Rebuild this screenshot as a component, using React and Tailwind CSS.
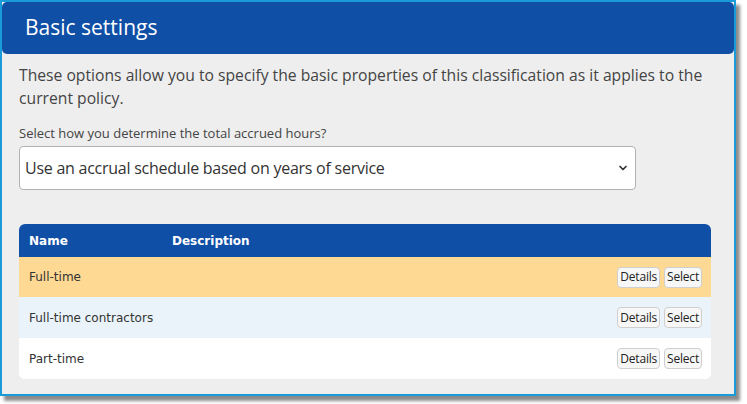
import { ChevronDown } from "lucide-react";

const rows = [
  { name: "Full-time", bg: "bg-[#fdd993]" },
  { name: "Full-time contractors", bg: "bg-[#eaf3fa]" },
  { name: "Part-time", bg: "bg-white" },
];

const RowButton = ({ label }) => (
  <button className="h-[21px] px-[2px] rounded-[4px] border border-[#cfcfcf] bg-[#f7f7f7] text-[12px] leading-none text-[#222] font-['Open_Sans',sans-serif] tracking-[-0.2px]">
    {label}
  </button>
);

export default function App() {
  return (
    <div className="w-[747px] h-[404px] bg-white">
      <div className="w-[736px] h-[396px] border-2 border-[#1a9bd9] bg-[#eeeeee] shadow-[4px_5px_3px_rgba(0,0,0,0.45)] flex flex-col font-['Open_Sans',sans-serif]">
        {/* header */}
        <div className="h-[52px] bg-[#0f4fa6] rounded-[5px] flex items-center pl-[23px]">
          <h1 className="text-white text-[21px]">Basic settings</h1>
        </div>

        <div className="px-[17px] pt-[10px]">
          <p className="text-[15.7px] leading-[23px] text-[#444]">
            These options allow you to specify the basic properties of this classification as it applies to the current policy.
          </p>

          <div className="mt-[14px] text-[13px] leading-[18px] text-[#444]">
            Select how you determine the total accrued hours?
          </div>
          <div className="mt-[4px] w-[617px] h-[44px] bg-white border border-[#b3b3b3] rounded-[4px] flex items-center justify-between pl-[5px] pr-[6px]">
            <span className="text-[16px] text-[#333] tracking-[-0.25px]">
              Use an accrual schedule based on years of service
            </span>
            <ChevronDown size={12} strokeWidth={3.5} className="text-[#333]" />
          </div>

          <div className="mt-[34px] w-[692px] rounded-[6px] overflow-hidden bg-white">
            <div className="h-[33px] bg-[#0f4fa6] flex items-center text-white text-[12px] font-bold font-['DejaVu_Sans',sans-serif]">
              <span className="w-[153px] pl-[10px]">Name</span>
              <span>Description</span>
            </div>
            {rows.map((r, i) => (
              <div
                key={r.name}
                className={`${i === 0 ? "h-[40px]" : "h-[41px]"} ${r.bg} flex items-center justify-between pl-[10px] pr-[9px] text-[12px] text-[#333] font-['DejaVu_Sans',sans-serif]`}
              >
                <span>{r.name}</span>
                <div className="flex gap-[4px]">
                  <RowButton label="Details" />
                  <RowButton label="Select" />
                </div>
              </div>
            ))}
          </div>
        </div>
      </div>
    </div>
  );
}
